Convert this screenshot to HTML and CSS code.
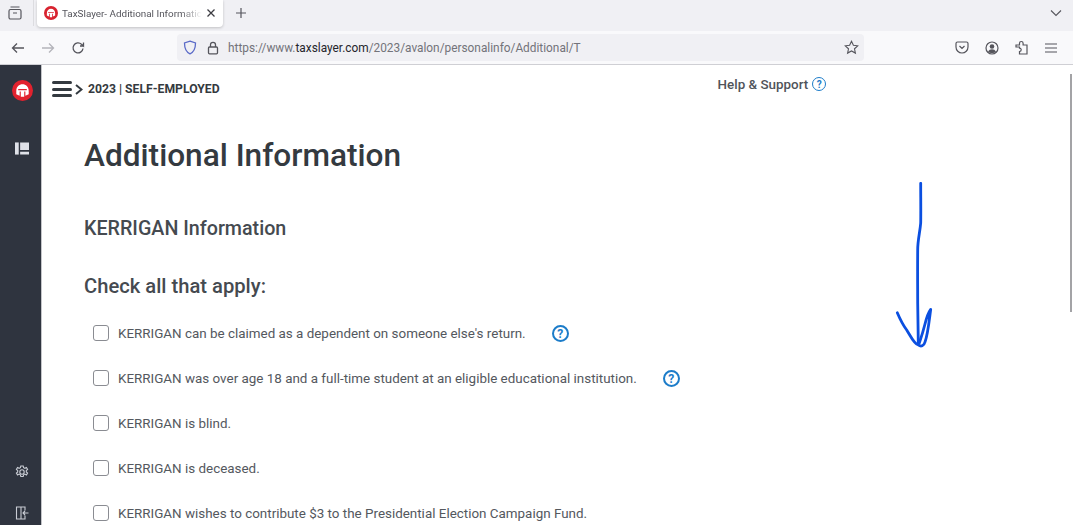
FILE: index.html
```html
<!DOCTYPE html>
<html lang="en">
<head>
    <meta charset="UTF-8">
    <meta name="viewport" content="width=device-width, initial-scale=1.0">
    <title>TaxSlayer- Additional Information</title>
    <link rel="stylesheet" href="styles.css">
</head>
<body>
    <!-- browser chrome -->
    <div class="tabbar">
        <div class="tab-side">
            <svg width="16" height="16" viewBox="0 0 16 16" fill="none" stroke="#55555c" stroke-width="1.2"><rect x="2" y="4.5" width="12" height="9.5" rx="1.5"/><path d="M3.5 2h9M6 8h4"/></svg>
        </div>
        <div class="tab">
            <svg class="favicon" width="14" height="14" viewBox="0 0 22 22"><circle cx="11" cy="11" r="11" fill="#d8232f"/><path d="M4.500 11.500C4.500 7 7.500 4.500 11 4.500s6.500 2.500 6.500 7V15L14 16.500V12h-1.200v5.500H9.200V12H8v4.500L4.500 15zM6.500 9.500v1.200h9V9.500z" fill="#fff" fill-rule="evenodd"/></svg>
            <span class="tab-title">TaxSlayer- Additional Informatic</span>
            <svg width="10" height="10" viewBox="0 0 10 10" stroke="#3c3c42" stroke-width="1.300"><path d="M1.500 1.500l7 7M8.500 1.500l-7 7"/></svg>
        </div>
        <svg class="new-tab" width="12" height="12" viewBox="0 0 12 12" stroke="#55555c" stroke-width="1.200"><path d="M6 1v10M1 6h10"/></svg>
        <svg class="tabs-menu" width="12" height="8" viewBox="0 0 12 8" fill="none" stroke="#55555c" stroke-width="1.100"><path d="M1 1.500l5 5 5-5"/></svg>
    </div>

    <div class="toolbar">
        <svg width="14" height="12" viewBox="0 0 14 12" fill="none" stroke="#55555c" stroke-width="1.300"><path d="M13 6H1.500M6 1.500L1.500 6 6 10.500"/></svg>
        <svg class="nav-forward" width="14" height="12" viewBox="0 0 14 12" fill="none" stroke="#b4b4ba" stroke-width="1.300"><path d="M1 6h11.500M8 1.500L12.500 6 8 10.500"/></svg>
        <svg class="nav-reload" width="14" height="14" viewBox="0 0 14 14" fill="none" stroke="#55555c" stroke-width="1.300"><path d="M12 7.500A5 5 0 1 1 10.500 3.300L12.500 5V1.500M12.500 5H9"/></svg>
        <div class="urlbar">
            <svg width="14" height="15" viewBox="0 0 14 15" fill="none" stroke="#5b6bc8" stroke-width="1.300"><path d="M7 1.200l5.500 1.800c0 5-1 8.800-5.500 10.800C2.500 11.800 1.500 8 1.500 3z"/></svg>
            <svg width="12" height="14" viewBox="0 0 12 14" fill="none" stroke="#55555c" stroke-width="1.300"><rect x="1.500" y="6" width="9" height="6.800" rx="1"/><path d="M3.500 6V3.800a2.500 2.500 0 0 1 5 0V6"/></svg>
            <span class="url">https://www.<b>taxslayer.com</b>/2023/avalon/personalinfo/Additional/T</span>
            <svg class="star" width="15" height="15" viewBox="0 0 15 15" fill="none" stroke="#55555c" stroke-width="1.100"><path d="M7.500 1.300l1.900 4 4.300.5-3.200 3 .9 4.300-3.900-2.200-3.900 2.200.9-4.300-3.200-3 4.300-.5z"/></svg>
        </div>
        <div class="toolbar-icons">
            <svg width="14" height="13" viewBox="0 0 14 13" fill="none" stroke="#55555c" stroke-width="1.200"><path d="M2.500 1h9A1.500 1.500 0 0 1 13 2.500V6a6 6 0 0 1-12 0V2.500A1.500 1.500 0 0 1 2.500 1zM4.500 5L7 7.500 9.500 5"/></svg>
            <svg width="14" height="14" viewBox="0 0 14 14"><circle cx="7" cy="7" r="6" fill="none" stroke="#55555c" stroke-width="1.200"/><circle cx="7" cy="5.500" r="2.300" fill="#55555c"/><path d="M3 11c.8-2 2.300-2.700 4-2.700s3.200.7 4 2.700c-2 1.500-6 1.500-8 0z" fill="#55555c"/></svg>
            <svg width="14" height="15" viewBox="0 0 14 15" fill="none" stroke="#55555c" stroke-width="1.200"><path d="M1 5h3.500V3.300a1.800 1.800 0 0 1 3.600 0V5H12v9H4.500v-2.500a1.700 1.700 0 0 0 0-3.400V7H1z"/></svg>
            <svg width="12" height="10" viewBox="0 0 12 10" stroke="#55555c" stroke-width="1.200"><path d="M0 1h12M0 5h12M0 9h12"/></svg>
        </div>
    </div>

    <div class="app">
        <nav class="sidebar">
            <svg class="logo" width="21" height="21" viewBox="0 0 22 22"><circle cx="11" cy="11" r="11" fill="#e2222e"/><path d="M4.500 11.500C4.500 7 7.500 4.500 11 4.500s6.500 2.500 6.500 7V15L14 16.500V12h-1.200v5.500H9.200V12H8v4.500L4.500 15zM6.500 9.500v1.200h9V9.500z" fill="#fff" fill-rule="evenodd"/></svg>
            <svg class="nav-dash" width="14" height="13" viewBox="0 0 15 13" fill="#dfe1e8"><rect x="0" y="0" width="4" height="13"/><path d="M5.500 0H15v8H5.500zM5.500 10H15v3H5.500z"/></svg>
            <div class="sidebar-bottom">
                <svg width="14" height="14" viewBox="0 0 14 14" fill="none" stroke="#c9ccd4" stroke-width="1.100"><path d="M5.800 1h2.400l.4 1.700 1.300.6 1.500-.8 1.200 1.900-1.300 1.100v1.400l1.300 1.100-1.200 2-1.500-.9-1.300.7-.4 1.700H5.800l-.4-1.700-1.300-.7-1.500.9-1.200-2 1.300-1.100V5.500L1.400 4.400l1.200-1.900 1.500.8 1.300-.6z"/><circle cx="7" cy="7" r="2.200"/></svg>
                <svg width="14" height="14" viewBox="0 0 14 14" fill="none" stroke="#c9ccd4" stroke-width="1.100"><path d="M6 1H1.500v12H6V1zM6 1h4v3.500M10 9.500V13H6M13.500 7H8M10 5L8 7l2 2"/></svg>
            </div>
        </nav>

        <main class="content">
            <header class="topbar">
                <div class="crumb">
                    <span class="burger"><i></i><i></i><i></i></span>
                    <svg class="crumb-arrow" width="8" height="11" viewBox="0 0 8 11" fill="none" stroke="#343a40" stroke-width="2"><path d="M1 1l5.500 4.500L1 10"/></svg>
                    <span>2023 | SELF-EMPLOYED</span>
                </div>
                <div class="help">Help &amp; Support <span class="qmark qmark-sm">?</span></div>
            </header>

            <h1>Additional Information</h1>
            <h2>KERRIGAN Information</h2>
            <h3>Check all that apply:</h3>

            <ul class="options">
                <li><span class="box"></span><span>KERRIGAN can be claimed as a dependent on someone else's return.</span><span class="qmark">?</span></li>
                <li><span class="box"></span><span>KERRIGAN was over age 18 and a full-time student at an eligible educational institution.</span><span class="qmark">?</span></li>
                <li><span class="box"></span><span>KERRIGAN is blind.</span></li>
                <li><span class="box"></span><span>KERRIGAN is deceased.</span></li>
                <li><span class="box"></span><span>KERRIGAN wishes to contribute $3 to the Presidential Election Campaign Fund.</span></li>
            </ul>

            <!-- hand drawn annotation on top of the page -->
            <svg class="scribble" width="40" height="170" viewBox="0 0 40 170" fill="none" stroke="#0b4fe0" stroke-width="2.800" stroke-linecap="round" stroke-linejoin="round">
                <path d="M25.700 1.300C25.700 15 25.900 30 25.700 41 25 50 22.700 58 22.700 68 22.500 90 22.700 110 22.700 121L23.300 161"/>
                <path d="M2.300 130.700C5 137 8 143 11.700 148 15 153 19 162 23.300 163 26 165 29 164 30 160 33 152 34 140 35.700 127.300 33 131 31.700 135 30 142 28 150 26 156 24.300 161"/>
            </svg>

            <div class="scrollbar"></div>
        </main>
    </div>
</body>
</html>
```

FILE: styles.css
```css
* {
    box-sizing: border-box;
}
html, body {
    height: 525px;
    overflow: hidden;
}
body {
    margin: 0;
    padding: 0;
    font-family: Roboto, Arial, sans-serif;
    background-color: #fff;
    color: #3f4349;
}
svg {
    display: block;
    flex: none;
}

/* browser chrome */
.tabbar {
    height: 31px;
    padding-bottom: 5px;
    background-color: #f0f0f4;
    display: flex;
    align-items: center;
}
.tab-side {
    width: 34px;
    height: 26px;
    padding-left: 7px;
    display: flex;
    align-items: center;
    border-right: 1px solid #dcdce0;
}
.tab {
    width: 186px;
    height: 27px;
    margin-left: 3px;
    padding: 0 9px 0 7px;
    background-color: #fff;
    border-radius: 0 0 4px 4px;
    box-shadow: 0 1px 3px rgba(0, 0, 0, 0.2);
    display: flex;
    align-items: center;
    gap: 4px;
}
.tab-title {
    flex: 1;
    font-size: 9.9px;
    color: #55555c;
    white-space: nowrap;
    -webkit-mask-image: linear-gradient(to right, #000 85%, transparent);
    mask-image: linear-gradient(to right, #000 85%, transparent);
}
.new-tab {
    margin-left: 12px;
}
.tabs-menu {
    margin-left: auto;
    margin-right: 11px;
}
.toolbar {
    height: 34px;
    background-color: #f9f9fb;
    border-bottom: 1px solid #cfcfd4;
    display: flex;
    align-items: center;
    padding-left: 11px;
}
.nav-forward {
    margin-left: 16px;
}
.nav-reload {
    margin-left: 16px;
}
.urlbar {
    width: 687px;
    height: 27px;
    margin-left: 92px;
    padding: 0 5px 0 6px;
    background-color: #f0f0f4;
    border-radius: 4px;
    display: flex;
    align-items: center;
    gap: 10px;
}
.url {
    flex: 1;
    margin-left: -1px;
    font-size: 11.85px;
    color: #73737a;
    white-space: nowrap;
}
.url b {
    font-weight: 400;
    color: #25252b;
}
.toolbar-icons {
    margin-left: 91px;
    display: flex;
    align-items: center;
    gap: 16px;
}

/* app */
.app {
    display: flex;
    height: 460px;
}
.sidebar {
    width: 42px;
    padding: 15px 0 0 3px;
    background-color: #2f343f;
    border-right: 1px solid #c4c5c9;
    display: flex;
    flex-direction: column;
    align-items: center;
}
.nav-dash {
    margin-top: 41px;
}
.sidebar-bottom {
    margin-top: auto;
    padding-bottom: 5px;
    display: flex;
    flex-direction: column;
    align-items: center;
    gap: 27px;
}
.content {
    flex: 1;
    position: relative;
    padding-left: 42px;
}
.topbar {
    height: 47px;
    padding-top: 14px;
    display: flex;
}
.crumb {
    margin-left: -32px;
    display: flex;
    align-items: center;
    height: 20px;
    font-size: 12.2px;
    font-weight: 700;
    color: #343a40;
}
.burger {
    width: 20px;
    display: flex;
    flex-direction: column;
    gap: 3.5px;
}
.burger i {
    display: block;
    height: 3px;
    border-radius: 2px;
    background-color: #343a40;
}
.crumb-arrow {
    margin: 0 5px 0 3px;
}
.help {
    margin-left: 498px;
    margin-top: -4px;
    font-size: 13.4px;
    font-weight: 500;
    height: 18px;
    display: flex;
    align-items: center;
    gap: 4px;
    color: #50545a;
}
.qmark {
    width: 17px;
    height: 17px;
    border: 2px solid #1c7cc9;
    border-radius: 50%;
    color: #1c7cc9;
    font-size: 12px;
    font-weight: 700;
    display: flex;
    align-items: center;
    justify-content: center;
    margin-left: 17px;
}
.qmark-sm {
    width: 14px;
    height: 14px;
    font-size: 10px;
    border-width: 1.5px;
    margin-left: 0;
}
h1 {
    margin: 0;
    padding-top: 25px;
    font-size: 31.6px;
    line-height: 38px;
    font-weight: 500;
    color: #343a40;
}
h2 {
    margin: 0;
    padding-top: 42px;
    font-size: 19.7px;
    line-height: 24px;
    font-weight: 500;
    color: #454a50;
}
h3 {
    margin: 0;
    padding-top: 32px;
    font-size: 20.2px;
    line-height: 26px;
    font-weight: 500;
    color: #454a50;
}
.options {
    list-style: none;
    margin: 0;
    padding: 12px 0 0 9px;
}
.options li {
    height: 45px;
    display: flex;
    align-items: center;
    gap: 9px;
    font-size: 13.42px;
    color: #54585e;
}
.box {
    width: 16px;
    height: 16px;
    margin-bottom: 2px;
    border: 1.5px solid #8a8c92;
    border-radius: 3px;
    background-color: #fff;
}
.scribble {
    position: absolute;
    left: 853px;
    top: 117px;
}
.scrollbar {
    position: absolute;
    right: 1px;
    top: 9px;
    width: 2px;
    height: 238px;
    background-color: #a3a3a6;
}
```
